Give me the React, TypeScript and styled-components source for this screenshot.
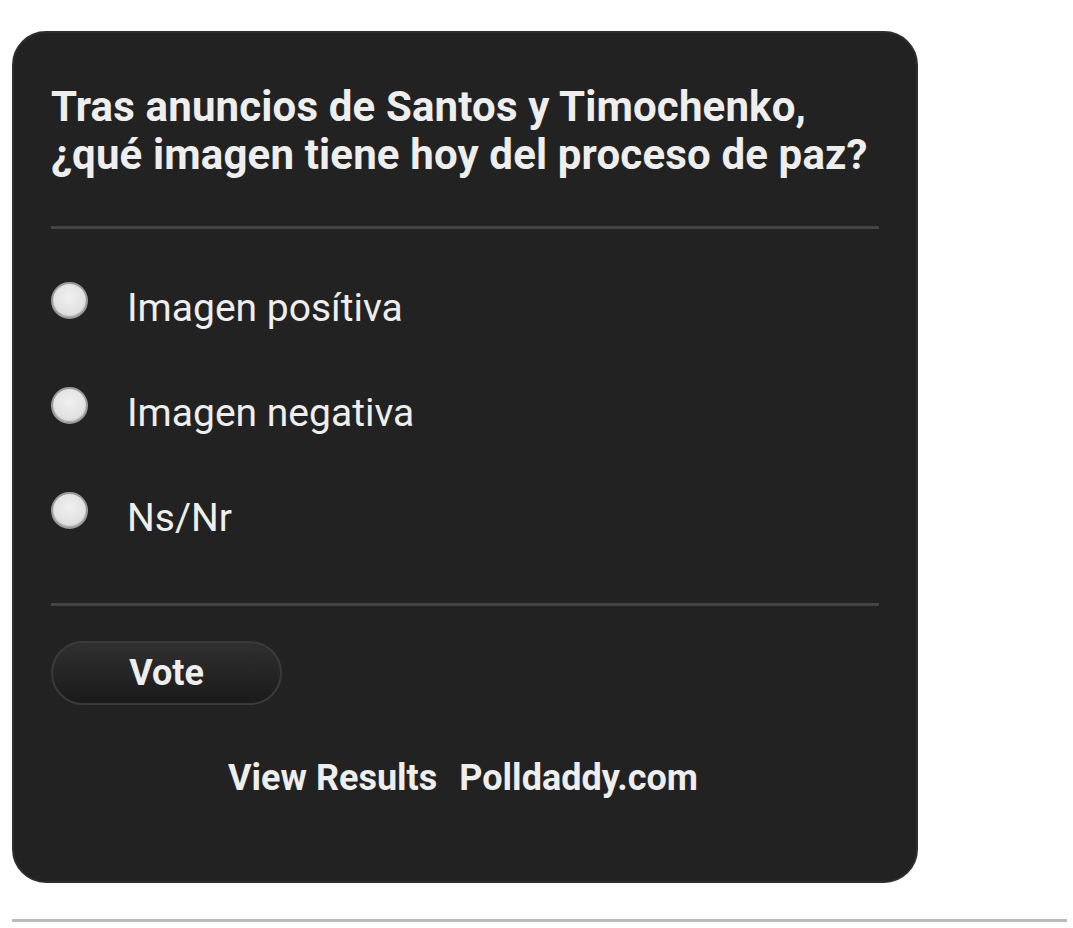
import styled, { createGlobalStyle } from 'styled-components';

const GlobalStyle = createGlobalStyle`
	html, body {
		margin: 0;
		padding: 0;
		background: #ffffff;
	}
	body {
		font-family: Roboto, 'Liberation Sans', Arial, sans-serif;
	}
`;

const answers = ['Imagen posítiva', 'Imagen negativa', 'Ns/Nr'];

export default function App() {
	return (
		<>
			<GlobalStyle />
			<Page>
				<Poll>
					<Question>
						Tras anuncios de Santos y Timochenko, ¿qué imagen tiene hoy del proceso de paz?
					</Question>
					<Divider top="47px" />
					<Answers>
						{answers.map((a) => (
							<Answer key={a}>
								<Radio />
								<AnswerText>{a}</AnswerText>
							</Answer>
						))}
					</Answers>
					<Divider top="0" />
					<VoteButton>Vote</VoteButton>
					<Footer>
						<FooterLink>View Results</FooterLink>
						<FooterLink>Polldaddy.com</FooterLink>
					</Footer>
				</Poll>
				<Rule />
			</Page>
		</>
	);
}

const Page = styled.div`
	padding: 31px 6px 0 12px;
`;

const Poll = styled.div`
	width: 906px;
	height: 852px;
	box-sizing: border-box;
	background: #222222;
	border: 2px solid #2e2e2e;
	border-radius: 34px;
	padding: 50px 37px 0 37px;
	color: #eeeeee;
`;

const Question = styled.div`
	font-weight: 700;
	font-size: 42px;
	line-height: 48px;
	letter-spacing: 0.15px;
	width: 830px;
`;

const Divider = styled.div<{ top: string }>`
	height: 3px;
	background: #444444;
	margin-top: ${(props) => props.top};
`;

const Answers = styled.div`
	display: flex;
	flex-direction: column;
	gap: 69px;
	padding-top: 53px;
	padding-bottom: 75px;
`;

const Answer = styled.div`
	display: flex;
	align-items: flex-start;
	height: 36px;
`;

const Radio = styled.span`
	width: 37px;
	height: 37px;
	box-sizing: border-box;
	border-radius: 50%;
	border: 2px solid #9a9a9a;
	background: radial-gradient(circle at 50% 40%, #f0f0f0 0%, #e2e2e2 60%, #cfcfcf 100%);
	box-shadow: inset 0 -1px 1px rgba(0, 0, 0, 0.25);
	flex: none;
`;

const AnswerText = styled.span`
	margin-left: 39px;
	font-size: 39px;
	line-height: 36px;
	margin-top: 8px;
	color: #eeeeee;
`;

const VoteButton = styled.div`
	margin-top: 35px;
	width: 231px;
	height: 64px;
	box-sizing: border-box;
	border-radius: 32px;
	border: 2px solid #3a3a3a;
	background: linear-gradient(#303030, #1a1a1a);
	display: flex;
	align-items: center;
	justify-content: center;
	font-weight: 700;
	font-size: 36px;
	color: #eeeeee;
`;

const Footer = styled.div`
	margin-top: 49px;
	display: flex;
	justify-content: center;
	gap: 22px;
	padding-right: 4px;
`;

const FooterLink = styled.span`
	font-weight: 700;
	font-size: 36px;
	line-height: 48px;
	color: #eeeeee;
`;

const Rule = styled.div`
	margin-top: 36px;
	height: 3px;
	background: #bbbbbb;
`;
